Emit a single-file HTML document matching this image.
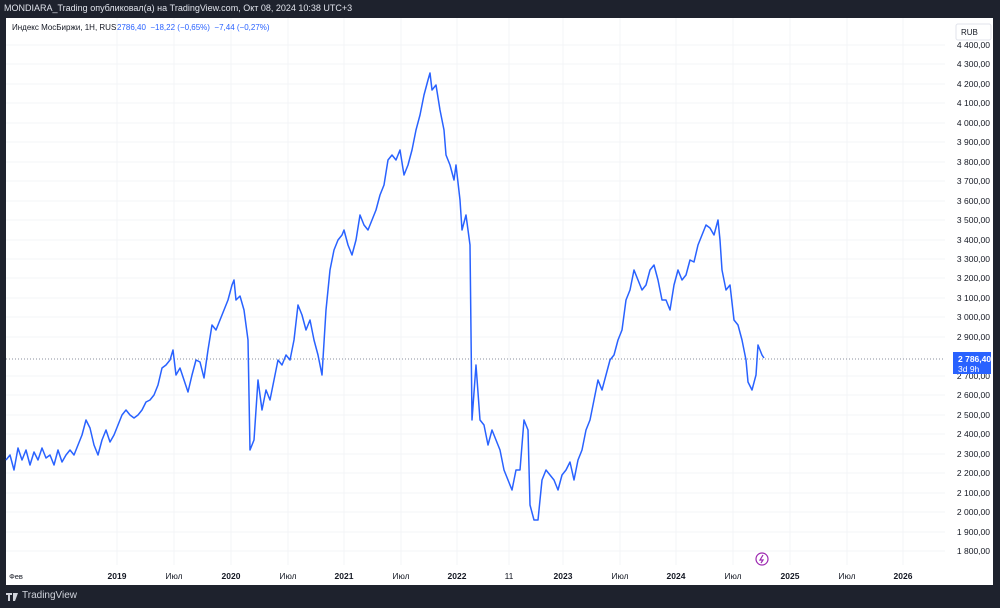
<!DOCTYPE html>
<html><head><meta charset="utf-8"><style>
body{margin:0;width:1000px;height:608px;background:#1e222d;position:relative;overflow:hidden;font-family:"Liberation Sans",sans-serif}
.t{position:absolute;color:#e0e3eb;font-size:9px;left:4px;top:3px}
.ch{position:absolute;left:6px;top:18px;width:987px;height:567px;background:#fff}
.tv{position:absolute;left:22px;top:590px;color:#d1d4dc;font-size:10px}
</style></head><body>
<div class="t">MONDIARA_Trading опубликовал(а) на TradingView.com, Окт 08, 2024 10:38 UTC+3</div>
<div class="ch"></div>
<svg width="1000" height="608" style="position:absolute;left:0;top:0" font-family="Liberation Sans, sans-serif">
<g stroke="#f3f4f7" stroke-width="1">
<line x1="117" y1="18" x2="117" y2="565"/><line x1="174" y1="18" x2="174" y2="565"/><line x1="231" y1="18" x2="231" y2="565"/><line x1="288" y1="18" x2="288" y2="565"/><line x1="344" y1="18" x2="344" y2="565"/><line x1="401" y1="18" x2="401" y2="565"/><line x1="457" y1="18" x2="457" y2="565"/><line x1="509" y1="18" x2="509" y2="565"/><line x1="563" y1="18" x2="563" y2="565"/><line x1="620" y1="18" x2="620" y2="565"/><line x1="676" y1="18" x2="676" y2="565"/><line x1="733" y1="18" x2="733" y2="565"/><line x1="790" y1="18" x2="790" y2="565"/><line x1="847" y1="18" x2="847" y2="565"/><line x1="903" y1="18" x2="903" y2="565"/>
<line x1="6" y1="45" x2="945" y2="45"/><line x1="6" y1="64" x2="945" y2="64"/><line x1="6" y1="84" x2="945" y2="84"/><line x1="6" y1="103" x2="945" y2="103"/><line x1="6" y1="123" x2="945" y2="123"/><line x1="6" y1="142" x2="945" y2="142"/><line x1="6" y1="162" x2="945" y2="162"/><line x1="6" y1="181" x2="945" y2="181"/><line x1="6" y1="201" x2="945" y2="201"/><line x1="6" y1="220" x2="945" y2="220"/><line x1="6" y1="240" x2="945" y2="240"/><line x1="6" y1="259" x2="945" y2="259"/><line x1="6" y1="278" x2="945" y2="278"/><line x1="6" y1="298" x2="945" y2="298"/><line x1="6" y1="317" x2="945" y2="317"/><line x1="6" y1="337" x2="945" y2="337"/><line x1="6" y1="376" x2="945" y2="376"/><line x1="6" y1="395" x2="945" y2="395"/><line x1="6" y1="415" x2="945" y2="415"/><line x1="6" y1="434" x2="945" y2="434"/><line x1="6" y1="454" x2="945" y2="454"/><line x1="6" y1="473" x2="945" y2="473"/><line x1="6" y1="493" x2="945" y2="493"/><line x1="6" y1="512" x2="945" y2="512"/><line x1="6" y1="532" x2="945" y2="532"/><line x1="6" y1="551" x2="945" y2="551"/>
</g>
<line x1="6" y1="359" x2="945" y2="359" stroke="#8a8f9c" stroke-width="1" stroke-dasharray="1,2"/>
<polyline fill="none" stroke="#2962ff" stroke-width="1.5" stroke-linejoin="round" points="6,460 10,455 14,470 18,448 22,460 26,450 30,465 34,452 38,460 42,448 46,458 50,455 54,465 58,450 62,462 66,455 70,450 74,455 78,445 82,435 86,420 90,428 94,445 98,455 102,440 106,430 110,442 114,435 118,425 122,415 126,410 130,415 134,418 138,415 142,410 146,402 150,400 154,395 158,385 162,368 166,365 170,360 173,350 176,375 180,368 184,380 188,392 192,375 196,360 200,362 204,378 208,350 212,325 216,330 220,320 224,310 228,300 232,285 234,280 236,300 240,296 244,310 248,340 250,450 254,440 258,380 262,410 266,390 270,400 274,380 278,360 282,365 286,355 290,360 294,340 298,305 302,315 306,330 310,320 314,340 318,355 322,375 326,310 330,270 334,250 338,240 342,235 344,230 348,245 352,255 356,240 360,215 364,225 368,230 372,220 376,210 380,195 384,185 388,160 392,155 396,160 400,150 404,175 408,165 412,150 416,130 420,115 424,95 428,80 430,73 432,90 436,85 440,110 444,130 446,155 450,165 454,180 456,165 460,200 462,230 466,215 470,245 472,420 476,365 480,420 484,425 488,445 492,430 496,440 500,450 504,470 508,480 512,490 516,470 520,470 524,420 528,430 530,505 534,520 538,520 542,480 546,470 550,475 554,480 558,490 562,475 566,470 570,462 574,480 578,460 582,450 586,430 590,420 594,400 598,380 602,390 606,375 610,360 614,355 618,340 622,330 626,300 630,290 634,270 638,280 642,290 646,285 650,270 654,265 658,280 662,300 666,300 670,310 674,285 678,270 682,280 686,275 690,260 694,262 698,245 702,235 706,225 710,228 714,235 718,220 720,240 722,270 726,290 730,285 734,320 738,325 742,340 746,360 748,382 752,390 756,375 758,345 762,355 764,358"/>
<g font-size="8.5" fill="#131722" text-anchor="end">
<text x="990" y="48">4 400,00</text><text x="990" y="67">4 300,00</text><text x="990" y="87">4 200,00</text><text x="990" y="106">4 100,00</text><text x="990" y="126">4 000,00</text><text x="990" y="145">3 900,00</text><text x="990" y="165">3 800,00</text><text x="990" y="184">3 700,00</text><text x="990" y="204">3 600,00</text><text x="990" y="223">3 500,00</text><text x="990" y="243">3 400,00</text><text x="990" y="262">3 300,00</text><text x="990" y="281">3 200,00</text><text x="990" y="301">3 100,00</text><text x="990" y="320">3 000,00</text><text x="990" y="340">2 900,00</text><text x="990" y="379">2 700,00</text><text x="990" y="398">2 600,00</text><text x="990" y="418">2 500,00</text><text x="990" y="437">2 400,00</text><text x="990" y="457">2 300,00</text><text x="990" y="476">2 200,00</text><text x="990" y="496">2 100,00</text><text x="990" y="515">2 000,00</text><text x="990" y="535">1 900,00</text><text x="990" y="554">1 800,00</text>
</g>
<rect x="956" y="24" width="35" height="16" fill="#fff" stroke="#e0e3eb" rx="2"/>
<text x="961" y="35" font-size="8" fill="#131722">RUB</text>
<rect x="953" y="352" width="38" height="22" fill="#2962ff"/>
<text x="958" y="362" font-size="8.5" fill="#fff" font-weight="bold">2 786,40</text>
<text x="958" y="372" font-size="8.5" fill="#fff">3d 9h</text>
<g font-size="8.5" fill="#131722" text-anchor="middle">
<text x="16" y="579" font-size="7.5">Фев</text><text x="117" y="579" font-weight="bold">2019</text><text x="174" y="579">Июл</text><text x="231" y="579" font-weight="bold">2020</text><text x="288" y="579">Июл</text><text x="344" y="579" font-weight="bold">2021</text><text x="401" y="579">Июл</text><text x="457" y="579" font-weight="bold">2022</text><text x="509" y="579">11</text><text x="563" y="579" font-weight="bold">2023</text><text x="620" y="579">Июл</text><text x="676" y="579" font-weight="bold">2024</text><text x="733" y="579">Июл</text><text x="790" y="579" font-weight="bold">2025</text><text x="847" y="579">Июл</text><text x="903" y="579" font-weight="bold">2026</text>
</g>
<circle cx="762" cy="559" r="6" fill="#fff" stroke="#9c27b0" stroke-width="1.2"/>
<path d="M763,555 L760,560 L763,560 L761,563" stroke="#9c27b0" fill="none" stroke-width="1.2"/>
<text x="12" y="30" font-size="8" fill="#131722">Индекс МосБиржи, 1H, RUS</text>
<text x="117" y="30" font-size="8" fill="#2962ff" xml:space="preserve">2786,40  −18,22 (−0,65%)  −7,44 (−0,27%)</text>
<path d="M6,593 h6 v2 h-2 v6 h-2 v-6 h-2z M13,593 h5 l-3,8 h-2z" fill="#d1d4dc"/>
</svg>
<div class="tv">TradingView</div>
</body></html>
